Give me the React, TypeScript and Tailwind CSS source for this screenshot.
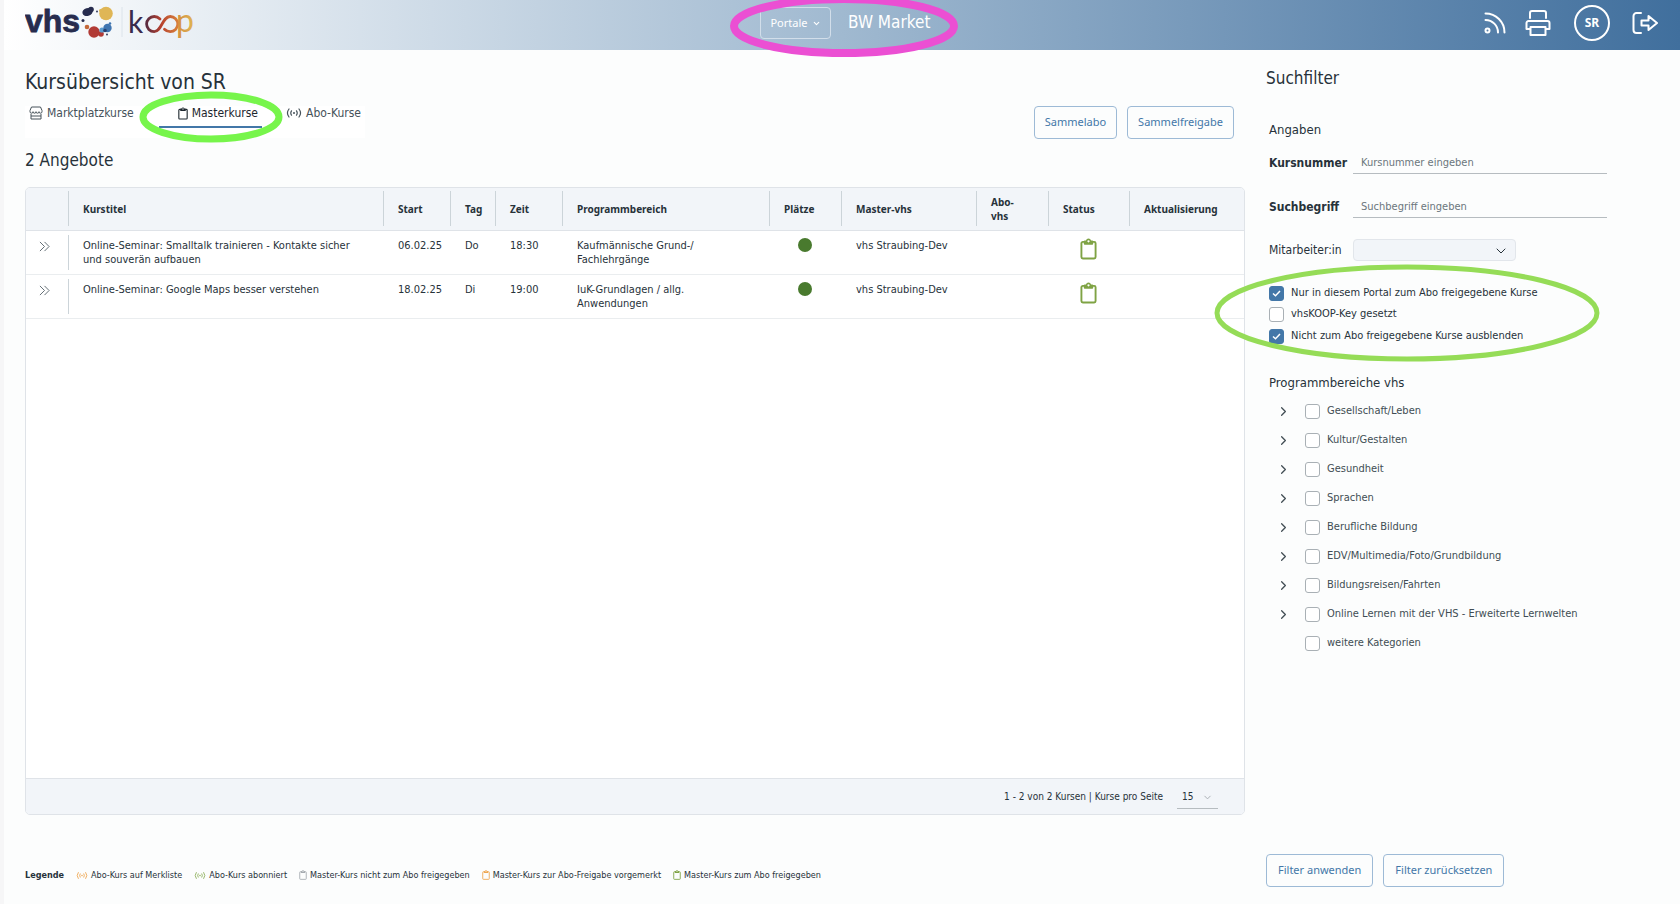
import { useState } from 'react'
import type { ReactNode } from 'react'
import { ChevronDown, ChevronRight } from 'lucide-react'

interface Course {
  title: string
  start: string
  day: string
  time: string
  area: string
  master: string
}

const courses: Course[] = [
  {
    title: 'Online-Seminar: Smalltalk trainieren - Kontakte sicher und souverän aufbauen',
    start: '06.02.25',
    day: 'Do',
    time: '18:30',
    area: 'Kaufmännische Grund-/ Fachlehrgänge',
    master: 'vhs Straubing-Dev',
  },
  {
    title: 'Online-Seminar: Google Maps besser verstehen',
    start: '18.02.25',
    day: 'Di',
    time: '19:00',
    area: 'IuK-Grundlagen / allg. Anwendungen',
    master: 'vhs Straubing-Dev',
  },
]

const columns = [
  { label: '', width: 'w-[42px]' },
  { label: 'Kurstitel', width: '' },
  { label: 'Start', width: 'w-[67px]' },
  { label: 'Tag', width: 'w-[45px]' },
  { label: 'Zeit', width: 'w-[67px]' },
  { label: 'Programmbereich', width: 'w-[207px]' },
  { label: 'Plätze', width: 'w-[72px]' },
  { label: 'Master-vhs', width: 'w-[135px]' },
  { label: 'Abo-vhs', width: 'w-[72px]' },
  { label: 'Status', width: 'w-[81px]' },
  { label: 'Aktualisierung', width: 'w-[115px]' },
]

const categories = [
  'Gesellschaft/Leben',
  'Kultur/Gestalten',
  'Gesundheit',
  'Sprachen',
  'Berufliche Bildung',
  'EDV/Multimedia/Foto/Grundbildung',
  'Bildungsreisen/Fahrten',
  'Online Lernen mit der VHS - Erweiterte Lernwelten',
  'weitere Kategorien',
]

const outlineButton =
  'h-[33px] rounded border border-[#9dbad6] font-["Noto_Sans",sans-serif] text-[11px] text-[#4377a8]'

function ClipboardIcon({ className }: { className?: string }) {
  return (
    <svg viewBox="0 0 18 23" fill="none" stroke="currentColor" strokeWidth="2" strokeLinejoin="round" className={className}>
      <path d="M5 4H3a1.5 1.5 0 0 0-1.5 1.5v14.500A1.5 1.5 0 0 0 3 21.5h12a1.5 1.5 0 0 0 1.5-1.5V5.5A1.5 1.5 0 0 0 15 4h-2" />
      <path
        fill="currentColor"
        fillRule="evenodd"
        stroke="none"
        d="M9 .5a2.8 2.8 0 0 0-2.7 2H5a1 1 0 0 0-1 1V6a1 1 0 0 0 1 1h8a1 1 0 0 0 1-1V3.5a1 1 0 0 0-1-1h-1.3A2.8 2.8 0 0 0 9 .5zm0 1.7a1.2 1.2 0 1 1 0 2.4 1.2 1.2 0 0 1 0-2.4z"
      />
    </svg>
  )
}

function BroadcastIcon({ className }: { className?: string }) {
  return (
    <svg viewBox="0 0 16 12" fill="none" stroke="currentColor" strokeLinecap="round" strokeWidth="1.2" className={className}>
      <path d="M3 2a6.5 6.5 0 0 0 0 8M5.5 3.8a4 4 0 0 0 0 4.4M13 2a6.5 6.5 0 0 1 0 8M10.5 3.8a4 4 0 0 1 0 4.4" />
      <circle cx="8" cy="6" r="1" fill="currentColor" stroke="none" />
    </svg>
  )
}

function ShopIcon() {
  return (
    <svg viewBox="0 0 14 14" fill="none" stroke="currentColor" strokeLinejoin="round" className="h-[14px] w-[14px]">
      <path d="M2.5 1h9L13 4.5v1.2a1.5 1.5 0 0 1-3 0 1.5 1.5 0 0 1-3 0 1.5 1.5 0 0 1-3 0 1.5 1.5 0 0 1-3 0V4.5z" />
      <path d="M2 8v5h10V8M2 10h10" />
    </svg>
  )
}

function Logo() {
  return (
    <svg viewBox="0 0 170 44" className="h-[44px] w-[170px] self-start" role="img" aria-label="vhs koop">
      <defs>
        <linearGradient id="koop-loop" x1="0" x2="1" y1="0" y2="0">
          <stop offset="0" stopColor="#5a2b3f" />
          <stop offset="0.45" stopColor="#b5402f" />
          <stop offset="1" stopColor="#d8803a" />
        </linearGradient>
        <linearGradient id="koop-p" x1="0" x2="1" y1="0" y2="0">
          <stop offset="0" stopColor="#d28a3d" />
          <stop offset="1" stopColor="#dfb656" />
        </linearGradient>
      </defs>
      <text x="0" y="32" fontFamily="Liberation Sans" fontWeight="700" fontSize="32" fill="#272c4e" stroke="#272c4e" strokeWidth="0.8">
        vhs
      </text>
      {/* molecule mark */}
      <g fill="#272c4e">
        <ellipse cx="62.5" cy="12" rx="5.2" ry="4" transform="rotate(-15 62.5 12)" />
        <circle cx="66" cy="9.5" r="2.8" />
        <circle cx="58" cy="20.5" r="1.5" />
        <circle cx="72" cy="11.5" r="0.9" />
        <circle cx="82" cy="34.5" r="0.9" />
      </g>
      <circle cx="81" cy="13.5" r="6.8" fill="#dfb656" />
      <circle cx="75.5" cy="10.5" r="1.5" fill="#dfb656" />
      <circle cx="62" cy="27" r="2.3" fill="#c4693a" />
      <circle cx="69" cy="32" r="5.7" fill="#b13a35" />
      <circle cx="76" cy="34" r="2.8" fill="#b13a35" />
      <circle cx="77" cy="30" r="2.6" fill="#5b9bd0" />
      <circle cx="82.5" cy="28" r="4.2" fill="#3f74b0" />
      <circle cx="85" cy="23.5" r="1.3" fill="#3f74b0" />
      <circle cx="80" cy="30.5" r="1.8" fill="#27406f" />
      <path d="M97 7v30" stroke="#dce3ea" />
      <text x="103" y="33" fontFamily="Lato" fontSize="30" fill="#3a2b4d">
        k
      </text>
      <path
        d="M135 19c-1.5-1.5-3.5-2.5-5.8-2.5a7.6 7.6 0 0 0 0 15.2c7.5 0 8-15.2 16-15.2a7.6 7.6 0 0 1 0 15.2c-2.3 0-4.2-1-5.7-2.5"
        fill="none"
        stroke="url(#koop-loop)"
        strokeWidth="2.8"
        strokeLinecap="round"
      />
      <text x="151" y="32" fontFamily="Lato" fontSize="32" fill="url(#koop-p)">
        p
      </text>
    </svg>
  )
}

function Header() {
  return (
    <header className="relative flex h-[50px] items-center justify-between bg-linear-to-r from-white via-[#a0b9d0] to-[#406f9d] pr-[22px] pl-[21px]">
      <Logo />
      <div className="absolute left-1/2 flex -translate-x-[82px] items-center gap-[17px] pb-1 text-white">
        <button className="flex h-[32px] w-[71px] items-center justify-center gap-1 rounded border border-[#d2deea] font-['Noto_Sans',sans-serif] text-[11px]">
          Portale
          <ChevronDown className="h-[9px] w-[9px]" strokeWidth={3} />
        </button>
        <span className="text-[17px]">BW Market</span>
        {/* marker round the portal switch */}
        <svg viewBox="0 0 230 64" fill="none" className="pointer-events-none absolute -top-[13px] -left-[31px] h-[64px] w-[230px]">
          <ellipse cx="115" cy="32" rx="110" ry="27" stroke="#eb4fd3" strokeWidth="8" />
        </svg>
      </div>
      <nav className="flex items-center pb-1 text-white">
        <a href="#news" aria-label="Neuigkeiten" className="mr-[19px]">
          <svg viewBox="0 0 22 22" fill="none" stroke="currentColor" strokeWidth="2" strokeLinecap="round" className="h-[22px] w-[22px]">
            <path d="M1.5 1.5a19 19 0 0 1 19 19M1.5 8a12.5 12.5 0 0 1 12.5 12.5" />
            <circle cx="3.5" cy="18.5" r="2" />
          </svg>
        </a>
        <button aria-label="Drucken" className="mr-[23px]">
          <svg viewBox="0 0 26 26" fill="none" stroke="currentColor" strokeWidth="2" strokeLinejoin="round" className="h-[26px] w-[26px]">
            <path d="M5 8V3a2 2 0 0 1 2-2h12a2 2 0 0 1 2 2v5" strokeLinecap="round" />
            <path d="M5 19H1.5v-6a2 2 0 0 1 2-2h19a2 2 0 0 1 2 2v6H21" />
            <path d="M5.5 17h15v8h-15z" />
          </svg>
        </button>
        <button className="mr-[22px] flex h-[36px] w-[36px] items-center justify-center rounded-full border-2 border-white font-['Noto_Sans',sans-serif] text-xs font-bold">
          SR
        </button>
        <button aria-label="Abmelden">
          <svg viewBox="0 0 26 24" fill="none" stroke="currentColor" strokeWidth="2" strokeLinejoin="round" strokeLinecap="round" className="h-[24px] w-[26px]">
            <path d="M9 2H4.500A3 3 0 0 0 1.5 5v14a3 3 0 0 0 3 3H9" />
            <path d="M9.5 9.5h7V5l8.5 7-8.5 7v-4.5h-7z" />
          </svg>
        </button>
      </nav>
    </header>
  )
}

function Tick({ label, defaultChecked, className }: { label: string; defaultChecked?: boolean; className?: string }) {
  return (
    <label className={`flex items-center gap-[7px] text-[11px] ${className ?? ''}`}>
      <span className="relative flex h-[15px] w-[15px]">
        <input
          type="checkbox"
          defaultChecked={defaultChecked}
          className="peer h-full w-full appearance-none rounded-[3px] border border-[#a9b0b5] bg-white checked:border-[#4377a8] checked:bg-[#4377a8]"
        />
        <svg viewBox="0 0 15 15" fill="none" stroke="white" strokeWidth="1.5" className="pointer-events-none absolute inset-0 hidden peer-checked:block">
          <path d="M4 7.500l2.500 2.300L11 5" />
        </svg>
      </span>
      {label}
    </label>
  )
}

function CourseTable() {
  return (
    <div className="flex flex-1 flex-col overflow-hidden rounded-[5px] border border-[#dfe3e8] bg-white">
      <table className="w-full table-fixed text-left text-[11px] leading-[14px]">
        <thead className="bg-[#f2f5f9] font-['Noto_Sans',sans-serif] text-[10px]">
          <tr className="h-[42px] border-b border-[#dfe3e8]">
            {columns.map((col, i) => (
              <th key={i} className={`${col.width} p-0`}>
                <div className={`flex h-[35px] items-center ${i > 0 ? 'border-l border-[#ccd4d9] pr-5 pl-[14px]' : ''}`}>
                  {col.label}
                </div>
              </th>
            ))}
          </tr>
        </thead>
        <tbody>
          {courses.map((course) => (
            <tr key={course.title} className="h-[44px] border-b border-[#eaedef] align-top">
              <td className="pt-[10px]">
                <button aria-label="Details" className="block pl-[13px] text-[#56626a]">
                  <svg viewBox="0 0 12 12" fill="none" stroke="currentColor" className="h-[11px] w-[11px]">
                    <path d="M1 1l5 5-5 5M6 1l5 5-5 5" />
                  </svg>
                </button>
              </td>
              <td className="py-1">
                <div className="h-[35px] border-l border-[#ccd4d9] pt-1 pr-8 pl-[14px]">{course.title}</div>
              </td>
              <td className="pt-2 pl-[15px]">{course.start}</td>
              <td className="pt-2 pl-[15px]">{course.day}</td>
              <td className="pt-2 pl-[15px]">{course.time}</td>
              <td className="pt-2 pr-[50px] pl-[15px]">{course.area}</td>
              <td className="pt-[7px]">
                <div className="mx-auto h-[14px] w-[14px] rounded-full bg-[#497a2e]" />
              </td>
              <td className="pt-2 pl-[15px]">{course.master}</td>
              <td />
              <td className="pt-[7px]">
                <ClipboardIcon className="mx-auto h-[22px] w-[17px] text-[#7fa344]" />
              </td>
              <td />
            </tr>
          ))}
        </tbody>
      </table>
      <div className="mt-auto flex h-[36px] items-center justify-end border-t border-[#dfe3e8] bg-[#f2f5f9] pr-[26px] text-[10px]">
        <label htmlFor="page-size">1 - 2 von 2 Kursen | Kurse pro Seite</label>
        <div className="relative ml-[14px]">
          <select id="page-size" className="h-[25px] w-[41px] appearance-none border-b border-[#b6bcc0] pl-[5px]">
            <option>15</option>
          </select>
          <ChevronDown className="pointer-events-none absolute top-2 right-[5px] h-[11px] w-[11px] text-[#a5abb0]" />
        </div>
      </div>
    </div>
  )
}

function Legend() {
  const items: { icon: ReactNode; label: string }[] = [
    { icon: <BroadcastIcon className="h-[9px] w-[12px] text-[#eea650]" />, label: 'Abo-Kurs auf Merkliste' },
    { icon: <BroadcastIcon className="h-[9px] w-[12px] text-[#8fb05c]" />, label: 'Abo-Kurs abonniert' },
    { icon: <ClipboardIcon className="h-[10px] w-2 text-[#a5abb0]" />, label: 'Master-Kurs nicht zum Abo freigegeben' },
    { icon: <ClipboardIcon className="h-[10px] w-2 text-[#eea650]" />, label: 'Master-Kurs zur Abo-Freigabe vorgemerkt' },
    { icon: <ClipboardIcon className="h-[10px] w-2 text-[#7fa344]" />, label: 'Master-Kurs zum Abo freigegeben' },
  ]

  return (
    <div className="flex items-center gap-3 pt-[54px] pb-[23px] text-[9px] leading-[12px] whitespace-nowrap">
      <strong>Legende</strong>
      {items.map((item) => (
        <span key={item.label} className="flex items-center gap-[3px]">
          {item.icon}
          {item.label}
        </span>
      ))}
    </div>
  )
}

function FilterPanel() {
  const inputClass =
    'h-[22px] w-[254px] border-b border-[#b6bcc0] px-2 text-[11px] placeholder:text-[#6b767c] focus:outline-none'

  return (
    <aside className="flex w-[414px] shrink-0 flex-col pt-[15px]">
      <h2 className="text-[17px] leading-[26px]">Suchfilter</h2>
      <div className="pl-[3px]">
        <h3 className="mt-[29px] text-[13px] leading-5">Angaben</h3>
        <div className="mt-3 flex h-[22px] items-center">
          <label htmlFor="nr" className="w-[84px] text-[12px] font-bold">Kursnummer</label>
          <input id="nr" placeholder="Kursnummer eingeben" className={inputClass} />
        </div>
        <div className="mt-[22px] flex h-[22px] items-center">
          <label htmlFor="term" className="w-[84px] text-[12px] font-bold">Suchbegriff</label>
          <input id="term" placeholder="Suchbegriff eingeben" className={inputClass} />
        </div>
        <div className="mt-[21px] flex h-[22px] items-center">
          <label htmlFor="staff" className="w-[84px] text-[12px]">Mitarbeiter:in</label>
          <div className="relative">
            <select id="staff" className="block h-[22px] w-[163px] appearance-none rounded border border-[#e2e6eb] bg-[#f2f5f9]" />
            <ChevronDown className="pointer-events-none absolute top-[4px] right-[7px] h-[16px] w-[16px]" strokeWidth={1.5} />
          </div>
        </div>

        <div className="relative mt-[21px]">
          <Tick label="Nur in diesem Portal zum Abo freigegebene Kurse" defaultChecked className="h-[22px]" />
          <Tick label="vhsKOOP-Key gesetzt" className="h-[21px]" />
          <Tick label="Nicht zum Abo freigegebene Kurse ausblenden" defaultChecked className="h-[22px]" />
          <svg viewBox="0 0 388 100" fill="none" className="pointer-events-none absolute -top-[19px] -left-[56px] h-[100px] w-[388px]">
            <ellipse cx="194" cy="50" rx="190" ry="46" stroke="#95dc57" strokeWidth="5" />
          </svg>
        </div>

        <h3 className="mt-[26px] text-[13px] leading-5">Programmbereiche vhs</h3>
        <ul className="mt-[4px] text-[#414d54]">
          {categories.map((name, i) => (
            <li key={name} className="flex h-[29px] items-center pl-[7px]">
              <span className="w-[29px]">
                {i < categories.length - 1 && (
                  <button aria-label={`${name} aufklappen`} className="block">
                    <ChevronRight className="h-[15px] w-[15px]" />
                  </button>
                )}
              </span>
              <Tick label={name} />
            </li>
          ))}
        </ul>
      </div>
      <div className="mt-auto mb-[17px] flex gap-[10px]">
        <button className={`${outlineButton} px-[11px]`}>Filter anwenden</button>
        <button className={`${outlineButton} px-[11px]`}>Filter zurücksetzen</button>
      </div>
    </aside>
  )
}

export default function App() {
  const [tab, setTab] = useState('Masterkurse')
  const tabs = [
    { name: 'Marktplatzkurse', icon: <ShopIcon />, className: 'pl-1 w-[134px]' },
    { name: 'Masterkurse', icon: <ClipboardIcon className="h-[13px] w-[10px]" />, className: 'justify-end w-[103px] pr-1' },
    { name: 'Abo-Kurse', icon: <BroadcastIcon className="h-[12px] w-[16px]" />, className: 'pl-6 w-[103px]' },
  ]

  return (
    <div className="flex min-h-screen flex-col border-l-4 border-[#f6f6f7] bg-[#fcfdfd] font-['DejaVu_Sans_Condensed','DejaVu_Sans',sans-serif] text-[#27323a]">
      <Header />
      <main className="flex flex-1 gap-[21px] pl-[21px]">
        <section className="flex min-w-0 flex-1 flex-col pt-[16px]">
          <h1 className="text-[21px] leading-8">Kursübersicht von SR</h1>
          <div className="flex items-start justify-between pt-[8px] pr-[11px]">
            <div className="relative flex h-[32px] items-start bg-white text-[12px]">
              {tabs.map((t) => (
                <button
                  key={t.name}
                  onClick={() => setTab(t.name)}
                  className={`flex h-[22px] items-center gap-1 border-b-2 pb-[6px] ${t.className} ${tab === t.name ? 'border-[#4377a8] text-[#1d272e]' : 'border-transparent text-[#46525a]'}`}
                >
                  {t.icon}
                  {t.name}
                </button>
              ))}
              <svg viewBox="0 0 144 54" fill="none" className="pointer-events-none absolute -top-[16px] left-[114px] h-[54px] w-[144px]">
                <ellipse cx="72" cy="27" rx="68" ry="22" stroke="#77f54b" strokeWidth="7" />
              </svg>
            </div>
            <div className="flex gap-[10px]">
              <button className={`${outlineButton} px-[10px]`}>Sammelabo</button>
              <button className={`${outlineButton} px-[10px]`}>Sammelfreigabe</button>
            </div>
          </div>
          <h2 className="mt-2 mb-[14px] text-[17px] leading-[26px]">2 Angebote</h2>
          <CourseTable />
          <Legend />
        </section>
        <FilterPanel />
      </main>
    </div>
  )
}
